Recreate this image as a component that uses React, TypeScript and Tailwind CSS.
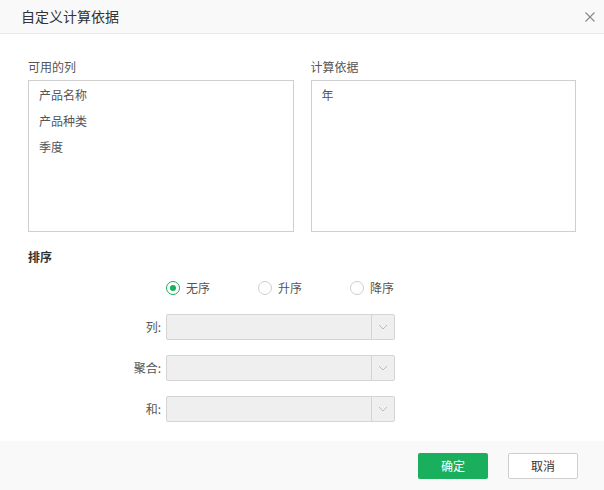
import { useState } from 'react'

const columns = ['产品名称', '产品种类', '季度']
const basis = ['年']
const orders = ['无序', '升序', '降序']
const selects = ['列:', '聚合:', '和:']

function Select({ label }: { label: string }) {
  return (
    <div className="flex items-center">
      <span className="w-[138px] pr-[5px] text-right text-[12px] text-[#555]">{label}</span>
      <div className="flex h-[26px] w-[229px] border border-[#d4d4d4] bg-[#efefef] rounded-[2px]">
        <div className="flex-1" />
        <div className="flex w-[23px] items-center justify-center border-l border-[#d4d4d4]">
          <svg width="10" height="6" viewBox="0 0 10 6" fill="none">
            <path d="M1 1l4 4 4-4" stroke="#bbb" strokeWidth="1" />
          </svg>
        </div>
      </div>
    </div>
  )
}

export default function App() {
  const [order, setOrder] = useState('无序')

  return (
    <div className="flex h-[490px] w-[604px] flex-col bg-white text-[12px] text-[#444]" style={{ fontFamily: '"Noto Sans CJK SC", "Liberation Sans", sans-serif' }}>
      <div className="flex h-[34px] items-center justify-between border-b border-[#e6e8eb] bg-[#f9f9f9] pl-[21px] pr-[8px]">
        <span className="text-[14px] text-[#333]">自定义计算依据</span>
        <svg width="12" height="12" viewBox="0 0 12 12">
          <path d="M1.5 1.5l9 9M10.5 1.5l-9 9" stroke="#888" strokeWidth="1.1" />
        </svg>
      </div>

      <div className="flex-1 px-[28px] pt-[25px]">
        <div className="flex gap-[17px]">
          {[{ title: '可用的列', items: columns }, { title: '计算依据', items: basis }].map(p => (
            <div key={p.title} className="w-[267px]">
              <div className="mb-[5px] leading-[16px] text-[#555]">{p.title}</div>
              <div className="h-[152px] border border-[#cfcfcf] px-[10px] pt-[1px]">
                {p.items.map(i => (
                  <div key={i} className="h-[26px] leading-[26px] text-[#555]">{i}</div>
                ))}
              </div>
            </div>
          ))}
        </div>

        <div className="mt-[17px] font-semibold leading-[16px] text-[#333]">排序</div>

        <div className="ml-[138px] mt-[14px] flex">
          {orders.map(o => (
            <label key={o} className="flex w-[92px] cursor-pointer items-center gap-[6px] text-[#555]" onClick={() => setOrder(o)}>
              <span className={`flex h-[14px] w-[14px] items-center justify-center rounded-full border ${order === o ? 'border-[#1aaf5d]' : 'border-[#cfcfcf]'}`}>
                {order === o && <span className="h-[6px] w-[6px] rounded-full bg-[#1aaf5d]" />}
              </span>
              {o}
            </label>
          ))}
        </div>

        <div className="mt-[17px] flex flex-col gap-[15px]">
          {selects.map(s => <Select key={s} label={s} />)}
        </div>
      </div>

      <div className="flex h-[49px] items-center justify-end gap-[20px] bg-[#f9f9f9] pr-[26px]">
        <button className="h-[26px] w-[70px] rounded-[2px] bg-[#1aaf5d] text-[12px] text-white">确定</button>
        <button className="h-[26px] w-[70px] rounded-[2px] border border-[#cfcfcf] bg-white text-[12px] text-[#333]">取消</button>
      </div>
    </div>
  )
}
